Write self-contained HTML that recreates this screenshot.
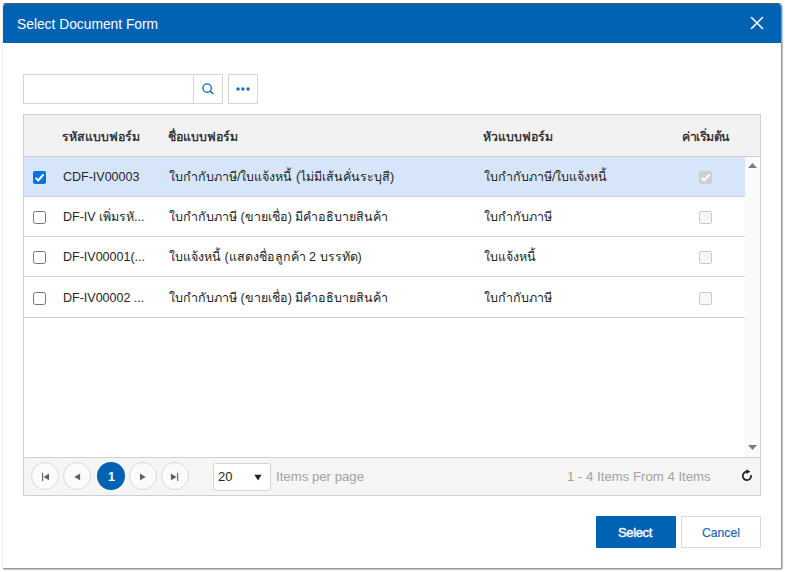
<!DOCTYPE html>
<html><head><meta charset="utf-8">
<style>
*{box-sizing:border-box;margin:0;padding:0}
html,body{width:785px;height:572px;background:#fff;overflow:hidden;font-family:"Liberation Sans",sans-serif;}
.abs{position:absolute}
#dlg{position:absolute;left:2px;top:3px;width:780px;height:566px;background:#fff;border-radius:4px 4px 2px 2px;
 border-top:1px solid #5a5550;border-left:1px solid #eee;border-right:1px solid #999;border-bottom:1px solid #999; box-shadow:1px 1px 1px rgba(0,0,0,.25);overflow:hidden}
#hdr{position:absolute;left:0;top:0;width:100%;height:39px;background:#0062b2}
#title{position:absolute;left:14px;top:13px;color:#fff;font-size:13.8px;white-space:nowrap}
#close{position:absolute;left:747px;top:12px;width:14px;height:14px}
.box{position:absolute;border:1px solid #d5d5d5;background:#fff}
.txt{position:absolute;white-space:nowrap;font-size:12.5px;line-height:15px;color:#262626}
.hd{font-weight:normal;color:#1e1e1e;font-size:12.3px;-webkit-text-stroke:0.3px #1e1e1e}
.row{position:absolute;left:0;width:721px;height:40px;border-bottom:1px solid #d0d0d0}
.cb{position:absolute;width:13px;height:13px;border:1px solid #767676;border-radius:2.5px;background:#fff}
.cbd{position:absolute;width:13px;height:13px;border:1px solid #cbcbcb;border-radius:2px;background:#f6f6f6}
.circ{position:absolute;width:28px;height:28px;border-radius:50%;border:1px solid #d9d9d9;background:#fbfbfb}
</style></head><body>
<div id="dlg">
  <div id="hdr">
    <div id="title">Select Document Form</div>
    <svg id="close" viewBox="0 0 14 14"><path d="M1.5 1.5L12.5 12.5M12.5 1.5L1.5 12.5" stroke="#fff" stroke-width="1.6" stroke-linecap="round"/></svg>
  </div>
</div>

<!-- search -->
<div class="box" style="left:23px;top:74px;width:200px;height:30px"></div>
<div class="abs" style="left:193px;top:75px;width:1px;height:28px;background:#d5d5d5"></div>
<svg class="abs" style="left:200px;top:80px" width="16" height="16" viewBox="0 0 16 16"><circle cx="7.1" cy="8.1" r="4.2" fill="none" stroke="#1a6bbd" stroke-width="1.35"/><path d="M10.1 11.1L13.4 14" stroke="#1a6bbd" stroke-width="1.45"/></svg>
<div class="box" style="left:228px;top:74px;width:30px;height:30px"></div>
<svg class="abs" style="left:228px;top:74px" width="30" height="30"><circle cx="10" cy="15" r="1.7" fill="#1a6bbd"/><circle cx="14.9" cy="15" r="1.7" fill="#1a6bbd"/><circle cx="20" cy="15" r="1.7" fill="#1a6bbd"/></svg>

<!-- grid -->
<div class="box" style="left:23px;top:114px;width:738px;height:382px;border-color:#cfcfcf"></div>
<div class="abs" style="left:24px;top:115px;width:736px;height:42px;background:#f2f2f2;border-bottom:1px solid #cfcfcf"></div>
<div class="txt hd" style="left:62px;top:130px">รหัสแบบฟอร์ม</div>
<div class="txt hd" style="left:168px;top:130px">ชื่อแบบฟอร์ม</div>
<div class="txt hd" style="left:483px;top:130px">หัวแบบฟอร์ม</div>
<div class="txt hd" style="left:682px;top:130px;letter-spacing:-0.45px">ค่าเริ่มต้น</div>

<div class="abs" style="left:24px;top:157px;width:721px;height:300px">
  <div class="row" style="top:0;background:#d6e5fa"></div>
  <div class="row" style="top:40px"></div>
  <div class="row" style="top:80px"></div>
  <div class="row" style="top:120px;height:41px"></div>
</div>
<!-- scrollbar -->
<div class="abs" style="left:745px;top:157px;width:15px;height:300px;background:#fafafa"></div>
<svg class="abs" style="left:745px;top:157px" width="15" height="300"><path d="M3 11L7.5 6L12 11Z" fill="#7c7c7c"/><path d="M3 288L7.5 293L12 288Z" fill="#7c7c7c"/></svg>

<!-- row content -->
<div class="abs" style="left:33px;top:171px;width:13px;height:13px;background:#0075dd;border-radius:2px"></div>
<svg class="abs" style="left:33px;top:171px" width="13" height="13"><path d="M2.6 6.9L5.2 9.5L10.5 3.3" fill="none" stroke="#fff" stroke-width="2"/></svg>
<div class="txt" style="left:63px;top:170px">CDF-IV00003</div>
<div class="txt" style="left:169px;top:170px">ใบกำกับภาษี/ใบแจ้งหนี้ (ไม่มีเส้นคั่นระบุสี)</div>
<div class="txt" style="left:484px;top:170px">ใบกำกับภาษี/ใบแจ้งหนี้</div>
<div class="abs" style="left:699px;top:171px;width:13px;height:13px;background:#cfcfcf;border-radius:2px"></div>
<svg class="abs" style="left:699px;top:171px" width="13" height="13"><path d="M2.6 6.9L5.2 9.5L10.5 3.3" fill="none" stroke="#fff" stroke-width="2"/></svg>

<div class="cb" style="left:33px;top:211px"></div>
<div class="txt" style="left:63px;top:210px">DF-IV เพิ่มรหั...</div>
<div class="txt" style="left:169px;top:210px">ใบกำกับภาษี (ขายเชื่อ) มีคำอธิบายสินค้า</div>
<div class="txt" style="left:484px;top:210px">ใบกำกับภาษี</div>
<div class="cbd" style="left:699px;top:211px"></div>

<div class="cb" style="left:33px;top:251px"></div>
<div class="txt" style="left:63px;top:250px">DF-IV00001(...</div>
<div class="txt" style="left:169px;top:250px">ใบแจ้งหนี้ (แสดงชื่อลูกค้า 2 บรรทัด)</div>
<div class="txt" style="left:484px;top:250px">ใบแจ้งหนี้</div>
<div class="cbd" style="left:699px;top:251px"></div>

<div class="cb" style="left:33px;top:292px"></div>
<div class="txt" style="left:63px;top:291px">DF-IV00002 ...</div>
<div class="txt" style="left:169px;top:291px">ใบกำกับภาษี (ขายเชื่อ) มีคำอธิบายสินค้า</div>
<div class="txt" style="left:484px;top:291px">ใบกำกับภาษี</div>
<div class="cbd" style="left:699px;top:292px"></div>

<!-- pager -->
<div class="abs" style="left:24px;top:457px;width:736px;height:38px;background:#f5f5f5;border-top:1px solid #d0d0d0"></div>
<div class="circ" style="left:31px;top:462px"></div>
<div class="circ" style="left:63px;top:462px"></div>
<div class="abs" style="left:97px;top:462px;width:28px;height:28px;border-radius:50%;background:#0062b2"></div>
<div class="txt" style="left:108px;top:470px;color:#fff;font-weight:bold">1</div>
<div class="circ" style="left:129px;top:462px"></div>
<div class="circ" style="left:161px;top:462px"></div>
<svg class="abs" style="left:24px;top:457px" width="180" height="38">
 <rect x="18" y="15.9" width="1.15" height="8" fill="#5f5f5f"/><path d="M25 16.6L19.7 20L25 23.3Z" fill="#5f5f5f"/>
 <path d="M56.1 16.6L50.4 20L56.1 23.3Z" fill="#5f5f5f"/>
 <path d="M116 16.6L121.7 20L116 23.3Z" fill="#5f5f5f"/>
 <path d="M146.9 16.6L152.6 20L146.9 23.3Z" fill="#5f5f5f"/><rect x="153.1" y="15.9" width="1.15" height="8" fill="#5f5f5f"/>
</svg>
<div class="abs" style="left:213px;top:463px;width:58px;height:28px;border:1px solid #d5d5d5;border-radius:3px;background:#fff"></div>
<div class="txt" style="left:218px;top:469px;font-size:13px">20</div>
<svg class="abs" style="left:252px;top:473px" width="12" height="10"><path d="M2.4 1.8L9.6 1.8L6 7.4Z" fill="#222"/></svg>
<div class="txt" style="left:276px;top:469px;color:#a3a3a3;font-size:13.2px">Items per page</div>
<div class="txt" style="left:567px;top:469px;color:#a3a3a3;font-size:13.2px">1 - 4 Items From 4 Items</div>
<svg class="abs" style="left:739px;top:468px" width="16" height="16"><path d="M8.2 3.7A4.2 4.2 0 1 0 12.1 7.2" fill="none" stroke="#222" stroke-width="1.75"/><path d="M7.4 1.2L11.4 3.5L7.4 5.9Z" fill="#222"/></svg>

<!-- buttons -->
<div class="abs" style="left:596px;top:516px;width:80px;height:32px;background:#0062b2;border-radius:1px"></div>
<div class="txt" style="left:618px;top:525px;color:#fff;font-size:13px;letter-spacing:-0.35px;-webkit-text-stroke:0.4px #fff">Select</div>
<div class="abs" style="left:681px;top:516px;width:80px;height:32px;border:1px solid #d8d8d8;background:#fff"></div>
<div class="txt" style="left:702px;top:526px;color:#1565b5;font-size:12.2px;-webkit-text-stroke:0.15px #1565b5">Cancel</div>
</body></html>
